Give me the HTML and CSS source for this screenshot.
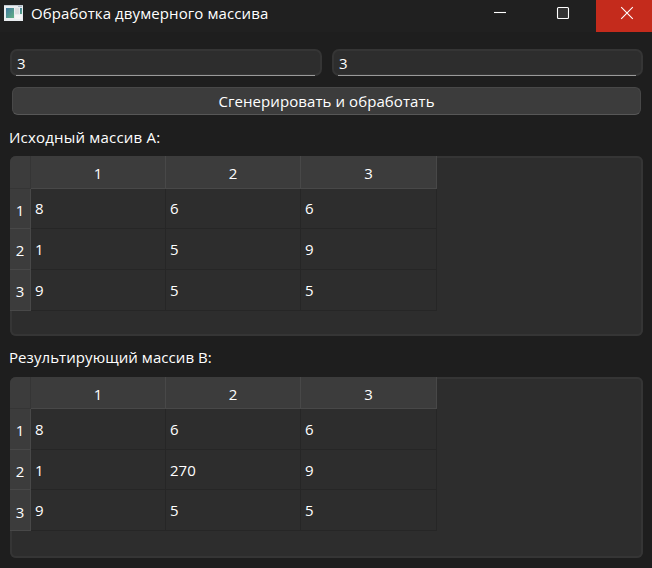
FILE: index.html
```html
<!DOCTYPE html>
<html lang="ru">
<head>
<meta charset="utf-8">
<title>Обработка двумерного массива</title>
<link rel="stylesheet" href="styles.css">
</head>
<body>
<header class="titlebar">
  <svg class="app-icon" width="19" height="16" viewBox="0 0 19 16">
    <defs><linearGradient id="g" x1="0" y1="0" x2="1" y2="1"><stop offset="0" stop-color="#3f789f"/><stop offset="1" stop-color="#62b083"/></linearGradient></defs>
    <rect width="19" height="16" fill="#e9edf0"/>
    <rect width="19" height="1" fill="#c3cbd2"/>
    <rect x="14" y="1" width="4" height="1" fill="#a9b5c5"/>
    <rect x="2" y="3" width="8" height="10" fill="url(#g)"/>
    <rect x="11" y="3" width="4" height="6" fill="#dcdee0"/>
    <rect x="16" y="3" width="2" height="6" fill="url(#g)"/>
    <rect x="11" y="10" width="7" height="4" fill="#f5f5f5"/>
  </svg>
  <h1 class="title">Обработка двумерного массива</h1>
  <div class="controls">
    <span class="control minimize"><svg width="14" height="14" viewBox="0 0 14 14"><path d="M1 6.5h12"/></svg></span>
    <span class="control maximize"><svg width="14" height="14" viewBox="0 0 14 14"><rect x="1.5" y="1.5" width="11" height="11" rx="1"/></svg></span>
    <span class="control close"><svg width="14" height="14" viewBox="0 0 14 14"><path d="M1.2 1.2l11.6 11.6M12.8 1.2L1.2 12.8"/></svg></span>
  </div>
</header>
<main class="content">
  <div class="inputs">
    <div class="field">3</div>
    <div class="field">3</div>
  </div>
  <div class="button"><span>Сгенерировать и обработать</span></div>
  <div class="label source">Исходный массив A:</div>
  <section class="view first">
    <div class="grid">
      <div class="head corner"></div><div class="head">1</div><div class="head">2</div><div class="head">3</div>
      <div class="side">1</div><div class="cell top">8</div><div class="cell top">6</div><div class="cell top">6</div>
      <div class="side">2</div><div class="cell">1</div><div class="cell">5</div><div class="cell">9</div>
      <div class="side">3</div><div class="cell">9</div><div class="cell">5</div><div class="cell">5</div>
    </div>
  </section>
  <div class="label result">Результирующий массив B:</div>
  <section class="view second">
    <div class="grid">
      <div class="head corner"></div><div class="head">1</div><div class="head">2</div><div class="head">3</div>
      <div class="side">1</div><div class="cell">8</div><div class="cell">6</div><div class="cell">6</div>
      <div class="side">2</div><div class="cell">1</div><div class="cell">270</div><div class="cell">9</div>
      <div class="side last">3</div><div class="cell">9</div><div class="cell">5</div><div class="cell">5</div>
    </div>
  </section>
</main>
</body>
</html>
```
FILE: styles.css
```css
* { box-sizing: border-box; }
body {
  margin: 0;
  height: 568px;
  overflow: hidden;
  background: #1e1e1e;
  color: #fff;
  font: 15px/20px "Open Sans", "Noto Sans", sans-serif;
}
.titlebar {
  display: flex;
  height: 32px;
  padding-left: 4px;
  background: #202020;
}
.app-icon { margin-top: 5px; }
.title {
  margin: 3px 0 0 8px;
  font-size: 15px;
  line-height: 20px;
  font-weight: 400;
  letter-spacing: 0.1px;
  white-space: nowrap;
}
.controls { display: flex; margin-left: auto; }
.control { width: 63px; padding: 6px 0 0 23px; }
.control.close { width: 56px; padding-left: 24px; background: #c42b1c; }
.control svg { display: block; fill: none; stroke: #fff; stroke-width: 1.1; }
.control.maximize rect { fill: #333; }
.content { padding: 17px 9px 0 10px; }
.inputs { display: grid; grid-template-columns: 312px 311px; gap: 10px; }
.field {
  position: relative;
  height: 27px;
  padding: 2px 0 0 5px;
  border: 2px solid #353535;
  border-radius: 7px;
  background: #2d2d2d;
}
.field::after {
  content: "";
  position: absolute;
  left: 4px;
  right: 5px;
  bottom: -2px;
  height: 1px;
  background: #9a9a9a;
}
.button {
  height: 28px;
  margin: 11px 2px 0;
  border: 1px solid #484848;
  border-bottom-color: #575757;
  border-radius: 6px;
  background: #3c3c3c;
  line-height: 27px;
  letter-spacing: 0.08px;
  text-align: center;
}
.label { height: 20px; margin-left: -1px; white-space: nowrap; }
.source { margin-top: 12px; letter-spacing: 0.2px; }
.result { margin-top: 11px; letter-spacing: 0.07px; }
.view {
  height: 180px;
  margin-top: 9px;
  border-radius: 6px;
  background: #2d2d2d;
  box-shadow: inset 0 0 0 2px #353535;
  overflow: hidden;
}
.view.second { margin-top: 10px; height: 181px; }
.grid {
  display: grid;
  grid-template-columns: 21px 135px 135px 136px;
  grid-template-rows: 33px 40px 41px 41px;
  width: 427px;
}
.second .grid { grid-template-rows: 32px 41px 40px 41px; }
.head {
  border-right: 1px solid #484848;
  border-bottom: 1px solid #484848;
  background: #3c3c3c;
  line-height: 34px;
  text-align: center;
}
.corner { border-color: #353535; }
.side {
  border-right: 1px solid #484848;
  border-bottom: 1px solid #484848;
  background: #3c3c3c;
  line-height: 42px;
  text-align: center;
}
.side.last { line-height: 44px; }
.cell {
  padding-left: 4px;
  border-right: 1px solid #262626;
  border-bottom: 1px solid #262626;
  line-height: 40px;
}
.cell.top { line-height: 39px; }
```
